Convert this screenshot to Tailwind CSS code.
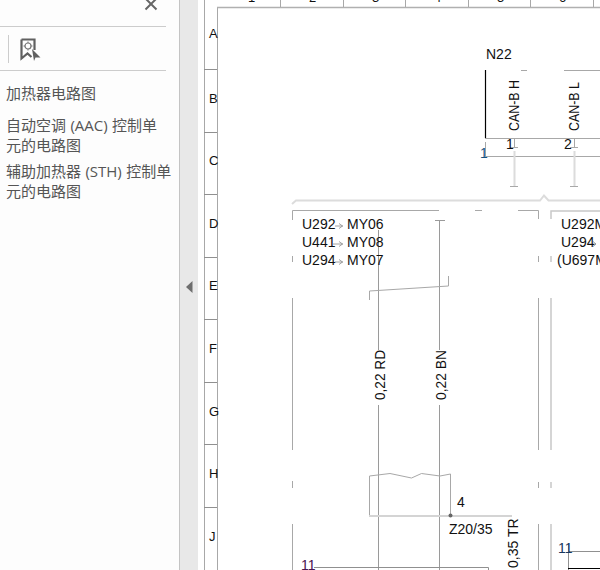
<!DOCTYPE html>
<html lang="zh">
<head>
<meta charset="utf-8">
<script src="https://cdn.jsdelivr.net/npm/@tailwindcss/browser@4"></script>
</head>
<body class="m-0 overflow-hidden bg-white">
<div class="flex w-[600px] h-[570px] overflow-hidden">
  <aside class="w-[180px] h-full shrink-0 bg-[#fdfdfd] border-r border-[#c4c4c4] overflow-hidden font-['Open_Sans','Noto_Sans_CJK_SC',sans-serif] text-[#555555]">
    <div class="h-[27px] w-[166px] border-b border-[#cccccc] relative">
      <svg class="absolute left-[144px] top-[-3px]" width="14" height="14" viewBox="0 0 14 14"><path d="M1.5 1.5 12.5 12.5M12.5 1.5 1.5 12.5" stroke="#666666" stroke-width="2" fill="none"/></svg>
    </div>
    <div class="h-[44px] w-[166px] border-b border-[#cccccc] flex items-center pl-2 gap-[11px]">
      <div class="w-px h-[28px] bg-[#cccccc]"></div>
      <svg width="21" height="23" viewBox="0 0 21 23" class="mt-[1px]">
        <path d="M1.5 1.5H14.5V12M1.5 1.5V20.5L7.5 15.5 11.5 19" fill="none" stroke="#606060" stroke-width="2.2"/>
        <circle cx="8" cy="8" r="3" fill="none" stroke="#777777" stroke-width="1.2"/>
        <path d="M8 3.5V5M8 11V12.5M3.5 8H5M11 8H12.5" stroke="#777777" stroke-width="1"/>
        <path d="M12 11 20.5 19.5 15.5 19.5 14 23Z" fill="#606060"/>
      </svg>
    </div>
    <nav class="pl-[6px] pt-[12px] w-[174px] text-[15px] leading-[20px] [word-spacing:0.5px]">
      <p class="h-[32px]">加热器电路图</p>
      <p class="mb-[6px]">自动空调 (AAC) 控制单<br>元的电路图</p>
      <p>辅助加热器 (STH) 控制单<br>元的电路图</p>
    </nav>
  </aside>
  <div class="w-[18px] h-full shrink-0 bg-[#e8e8e8] flex items-center justify-center">
    <svg width="7" height="12" viewBox="0 0 7 12" class="mt-[3px]"><path d="M6.5 0V12L0 6Z" fill="#6e6e6e"/></svg>
  </div>
  <main class="relative flex-1 h-full bg-white overflow-hidden">
    <svg class="absolute left-[-198px] top-0 font-['Liberation_Sans',sans-serif]" width="600" height="570" viewBox="0 0 600 570">
      <g fill="none" stroke="#a8a8a8" stroke-width="1">
        <path d="M204.5 0V570M217.5 7V570"/>
        <path d="M217 7.5H600" stroke="#b0b0b0" stroke-width="1.5"/>
        <path d="M280.5 0V7M343.5 0V7M405.5 0V7M468.5 0V7M530.5 0V7M593.5 0V7"/>
        <path d="M204 69.5H217M204 132.5H217M204 194.5H217M204 257.5H217M204 319.5H217M204 382.5H217M204 444.5H217M204 507.5H217" stroke="#909090"/>
        <path d="M521 70.5H527M564 70.5H600"/>
        <path d="M485 138.5H600M485 156.5H600M485.5 142V157"/>
        <path d="M510 147.5H518M570 147.5H578M510 186.5H518M570 186.5H578M514.5 139V147M574.5 139V147"/>
        <path d="M514.5 151V186M574.5 151V186" stroke="#dcdcdc" stroke-width="2"/>
        <path d="M292 204 296 200.5H540L544 195.5 548.5 200.5H600" stroke="#dcdcdc" stroke-width="2"/>
        <path d="M292.5 220V210.5H439M475 210.5H482M518 210.5H538.5V219M292.5 256V262M292.5 298V450M292.5 481V488M292.5 524V570"/>
        <path d="M538.5 256V262M538.5 298V450M538.5 482V488M538.5 524V570"/>
        <path d="M551 219V211H600M551 256V262M551 298V450M551 482V488M551 524V570" stroke="#c8c8c8" stroke-width="1.5"/>
        <path d="M378.5 230V350M378.5 405V570M439.5 220V350M439.5 405V570M435 220.5H445" stroke="#9a9a9a"/>
        <path d="M369.5 300V291L448.5 286V276M369.5 516V476L390 473.5 411.5 478 421.5 473.5 440 476 450.5 474V516"/>
        <path d="M369 516H512" stroke="#d4d4d4" stroke-width="2"/>
        <path d="M314 567.5H488.5V570M568 551.5H600M568.5 544V570" stroke="#909090"/>
        <path d="M335 226 343 226M339 223.5 342.5 226 339 228.5M333 244 343 244M339 241.5 342.5 244 339 246.5M335 262 343 262M339 259.5 342.5 262 339 264.5M588 244H596M593 241.5 596 244 593 246.5" stroke="#8a8a8a" stroke-width="0.8"/>
      </g>
      <path d="M485.5 70V138" stroke="#000000" stroke-width="1.2"/>
      <path d="M568 568.5H600" stroke="#000000" stroke-width="1"/>
      <circle cx="450.5" cy="515.5" r="2" fill="#666666"/>
      <g fill="#111111" font-size="13">
        <text x="209" y="38">A</text><text x="209" y="103">B</text><text x="209" y="165">C</text>
        <text x="209" y="228">D</text><text x="209" y="290">E</text><text x="209" y="353">F</text>
        <text x="209" y="416">G</text><text x="209" y="478">H</text><text x="209" y="541">J</text>
        <text x="248" y="2">1</text><text x="309" y="2">2</text><text x="372" y="2">3</text>
        <text x="434" y="2">4</text><text x="497" y="2">5</text><text x="559" y="2">6</text>
      </g>
      <g fill="#111111" font-size="14">
        <text x="486" y="59">N22</text>
        <text x="506" y="149">1</text><text x="564" y="149">2</text>
        <text x="480" y="158" fill="#17527e">1</text>
        <text transform="translate(519 131) rotate(-90)" textLength="51" lengthAdjust="spacingAndGlyphs">CAN-B H</text>
        <text transform="translate(579 131) rotate(-90)" textLength="49" lengthAdjust="spacingAndGlyphs">CAN-B L</text>
        <text x="302" y="229">U292</text><text x="347" y="229">MY06</text>
        <text x="302" y="247">U441</text><text x="347" y="247">MY08</text>
        <text x="302" y="265">U294</text><text x="347" y="265">MY07</text>
        <text x="561" y="229">U292M</text>
        <text x="561" y="247">U294</text>
        <text x="557" y="265">(U697M</text>
        <text transform="translate(385 400) rotate(-90)" textLength="50" lengthAdjust="spacingAndGlyphs">0,22 RD</text>
        <text transform="translate(446 400) rotate(-90)" textLength="50" lengthAdjust="spacingAndGlyphs">0,22 BN</text>
        <text x="457" y="507">4</text>
        <text x="449" y="534">Z20/35</text>
        <text transform="translate(518 568) rotate(-90)">0,35 TR</text>
        <text x="301" y="569.5" fill="#4a1450">11</text>
        <text x="558" y="553" fill="#17375e">11</text>
        <text x="368" y="580">1</text><text x="427" y="580">2</text>
      </g>
    </svg>
  </main>
</div>
</body>
</html>
